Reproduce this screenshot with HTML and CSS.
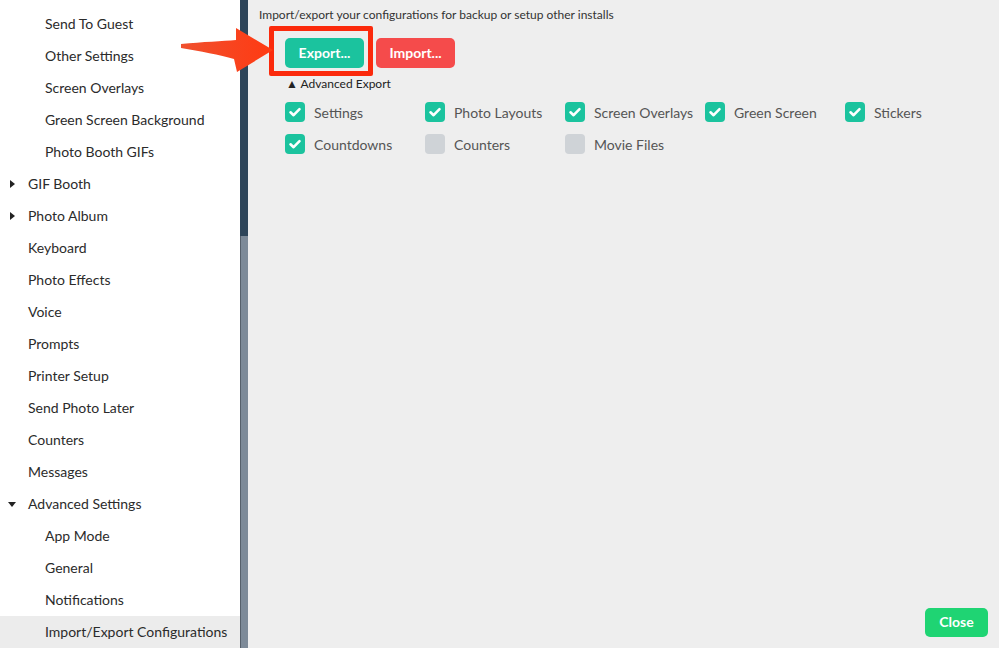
FILE: index.html
```html
<!DOCTYPE html>
<html>
<head>
<meta charset="utf-8">
<link rel="stylesheet" href="styles.css">
</head>
<body>
<div class="app">
  <nav class="sidebar">
    <ul class="menu">
      <li class="item sub">Send To Guest</li>
      <li class="item sub">Other Settings</li>
      <li class="item sub">Screen Overlays</li>
      <li class="item sub">Green Screen Background</li>
      <li class="item sub">Photo Booth GIFs</li>
      <li class="item top"><span class="tri right"></span>GIF Booth</li>
      <li class="item top"><span class="tri right"></span>Photo Album</li>
      <li class="item top">Keyboard</li>
      <li class="item top">Photo Effects</li>
      <li class="item top">Voice</li>
      <li class="item top">Prompts</li>
      <li class="item top">Printer Setup</li>
      <li class="item top">Send Photo Later</li>
      <li class="item top">Counters</li>
      <li class="item top">Messages</li>
      <li class="item top"><span class="tri down"></span>Advanced Settings</li>
      <li class="item sub">App Mode</li>
      <li class="item sub">General</li>
      <li class="item sub">Notifications</li>
      <li class="item sub active">Import/Export Configurations</li>
    </ul>
  </nav>
  <div class="scrollbar"><div class="track"></div><div class="thumb"></div></div>
  <main class="main">
    <p class="desc">Import/export your configurations for backup or setup other installs</p>
    <div class="actions">
      <div class="export-wrap">
        <button class="btn btn-export">Export...</button>
        <div class="highlight"></div>
      </div>
      <button class="btn btn-import">Import...</button>
    </div>
    <div class="adv">&#9650; Advanced Export</div>
    <div class="grid">
      <label class="chk"><span class="box on"><svg viewBox="0 0 20 20"><path d="M5.5 10.3 L8.6 13.2 L14.5 7.2" /></svg></span>Settings</label>
      <label class="chk"><span class="box on"><svg viewBox="0 0 20 20"><path d="M5.5 10.3 L8.6 13.2 L14.5 7.2" /></svg></span>Photo Layouts</label>
      <label class="chk"><span class="box on"><svg viewBox="0 0 20 20"><path d="M5.5 10.3 L8.6 13.2 L14.5 7.2" /></svg></span>Screen Overlays</label>
      <label class="chk"><span class="box on"><svg viewBox="0 0 20 20"><path d="M5.5 10.3 L8.6 13.2 L14.5 7.2" /></svg></span>Green Screen</label>
      <label class="chk"><span class="box on"><svg viewBox="0 0 20 20"><path d="M5.5 10.3 L8.6 13.2 L14.5 7.2" /></svg></span>Stickers</label>
      <label class="chk"><span class="box on"><svg viewBox="0 0 20 20"><path d="M5.5 10.3 L8.6 13.2 L14.5 7.2" /></svg></span>Countdowns</label>
      <label class="chk"><span class="box"></span>Counters</label>
      <label class="chk"><span class="box"></span>Movie Files</label>
    </div>
    <div class="footer">
      <button class="btn btn-close">Close</button>
    </div>
  </main>
  <svg class="arrow" width="100" height="52" viewBox="0 0 100 52">
    <defs>
      <linearGradient id="ag" x1="0" y1="0" x2="1" y2="0">
        <stop offset="0" stop-color="#f0502e"/>
        <stop offset="1" stop-color="#ff3a12"/>
      </linearGradient>
    </defs>
    <path d="M3 19 C25 17 45 16 58 15 L58 3 L95 25 L59 47 L56 34 C42 30 22 26 3 23 Z" fill="url(#ag)"/>
  </svg>
</div>
</body>
</html>
```
FILE: styles.css
```css
* { box-sizing: border-box; }
html, body { margin: 0; padding: 0; }
body {
  font-family: Lato, "Open Sans", "Liberation Sans", sans-serif;
  background: #eeeeee;
  color: #333;
}
.app {
  position: relative;
  display: flex;
  width: 999px;
  height: 648px;
  overflow: hidden;
}
.sidebar {
  width: 240px;
  flex: none;
  background: #ffffff;
}
.menu {
  list-style: none;
  margin: 0;
  padding: 8px 0 0 0;
}
.item {
  position: relative;
  height: 32px;
  line-height: 32px;
  font-size: 14px;
  color: #2b2b2b;
  white-space: nowrap;
}
.item.top { padding-left: 28px; }
.item.sub { padding-left: 45px; }
.item.active { background: #ececec; }
.tri {
  position: absolute;
  width: 0;
  height: 0;
}
.tri.right {
  left: 10px;
  top: 12px;
  border-top: 4px solid transparent;
  border-bottom: 4px solid transparent;
  border-left: 5px solid #222;
}
.tri.down {
  left: 8px;
  top: 14px;
  border-left: 4.5px solid transparent;
  border-right: 4.5px solid transparent;
  border-top: 5px solid #222;
}
.scrollbar {
  width: 8px;
  flex: none;
  display: flex;
  flex-direction: column;
}
.track { height: 236px; background: #2e4559; }
.thumb { flex: 1; background: #7d8a98; border-left: 1px solid #56606b; }
.main {
  flex: 1;
  display: flex;
  flex-direction: column;
  padding: 8px 11px 11px 11px;
}
.desc {
  margin: 0;
  font-size: 12px;
  line-height: 14px;
  color: #333;
}
.actions {
  display: flex;
  gap: 12px;
  margin-top: 16px;
  padding-left: 26px;
}
.export-wrap { position: relative; }
.btn {
  font-family: Lato, "Open Sans", "Liberation Sans", sans-serif;
  font-size: 14px;
  font-weight: 700;
  color: #fff;
  border: none;
  border-radius: 5px;
  height: 30px;
  width: 79px;
  padding: 0 0 2px 0;
  cursor: pointer;
}
.btn-export { background: #1bc39e; }
.btn-import { background: #f54b4b; }
.highlight {
  position: absolute;
  left: -16px;
  top: -12px;
  right: -9px;
  bottom: -8px;
  border: 5px solid #fb2a0c;
  border-radius: 2px;
  pointer-events: none;
}
.adv {
  margin-top: 9px;
  padding-left: 27px;
  font-size: 12px;
  line-height: 14px;
  color: #222;
}
.grid {
  margin-top: 5px;
  padding-left: 26px;
  display: grid;
  grid-template-columns: repeat(5, 140px);
  grid-auto-rows: 32px;
}
.chk {
  display: flex;
  align-items: center;
  gap: 9px;
  font-size: 14px;
  color: #555;
  white-space: nowrap;
}
.box {
  width: 20px;
  height: 20px;
  border-radius: 4px;
  background: #cfd3d7;
  flex: none;
  display: flex;
}
.box.on { background: #1bc39e; }
.box svg { width: 20px; height: 20px; }
.box svg path {
  fill: none;
  stroke: #fff;
  stroke-width: 2.6;
  stroke-linecap: round;
  stroke-linejoin: round;
}
.footer {
  margin-top: auto;
  display: flex;
  justify-content: flex-end;
}
.btn-close {
  background: #1fd473;
  width: 63px;
  height: 29px;
}
.arrow {
  position: absolute;
  left: 178px;
  top: 25px;
}
```
